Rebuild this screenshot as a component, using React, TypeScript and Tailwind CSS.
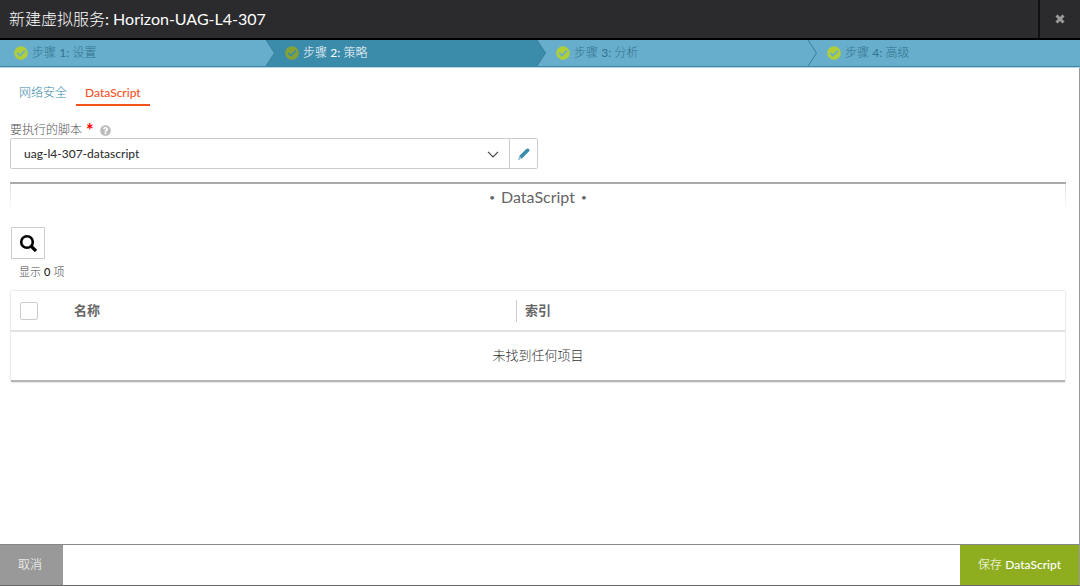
import React from 'react';
import { FaCheckCircle, FaQuestionCircle } from 'react-icons/fa';

const steps = [
  { id: 1, label: '设置' },
  { id: 2, label: '策略' },
  { id: 3, label: '分析' },
  { id: 4, label: '高级' },
];

const CURRENT_STEP = 2;

function StepArrow({ current, nextCurrent }: { current: boolean; nextCurrent: boolean }) {
  return (
    <svg className="absolute top-0 -right-1 z-10 h-[26px] w-[9px]" viewBox="0 0 9 26" aria-hidden="true">
      <path d="M0 0H9V26H0Z" className={nextCurrent ? 'fill-[#3b8bab]' : 'fill-[#66aecb]'} />
      <path
        d="M0 0L8.5 13L0 26"
        className={current ? 'fill-[#3b8bab]' : 'fill-[#66aecb]'}
        stroke="#3a7f9b"
        strokeWidth="1"
      />
    </svg>
  );
}

function StepBar() {
  return (
    <nav className="border-b border-[#b4d8e6]" aria-label="步骤">
      <ol className="grid grid-cols-[271fr_271fr_271fr_267fr] border-b border-[#3b87a5] bg-[#66aecb]">
        {steps.map((step, i) => {
          const current = step.id === CURRENT_STEP;
          return (
            <li key={step.id} className={`relative h-[26px] ${current ? 'bg-[#3b8bab]' : 'bg-[#66aecb]'}`}>
              <a
                href={`#step-${step.id}`}
                aria-current={current ? 'step' : undefined}
                className={`flex h-full items-center gap-1 pl-3.5 text-xs ${current ? 'text-white' : 'text-[#33738d]'}`}
              >
                <FaCheckCircle className={`size-3.5 ${current ? 'text-[#86a136]' : 'text-[#b0ce3c]'}`} />
                <span>
                  步骤 <b>{step.id}:</b> {step.label}
                </span>
              </a>
              {i < steps.length - 1 && (
                <StepArrow current={current} nextCurrent={steps[i + 1].id === CURRENT_STEP} />
              )}
            </li>
          );
        })}
      </ol>
    </nav>
  );
}

function ItemsTable() {
  return (
    <table className="w-full table-fixed border-collapse border-b-2 border-b-[#b5b5b5] text-[13px] shadow-[0_0_2px_rgba(0,0,0,0.25)]">
      <thead>
        <tr className="h-10 border-b-2 border-[#e2e2e2] text-left text-[#666]">
          <th className="w-[54px] pl-[9px]">
            <input
              type="checkbox"
              aria-label="全选"
              className="block size-[18px] appearance-none rounded-xs border border-[#ccc] bg-white"
            />
          </th>
          <th className="w-[451px] pl-[9px] font-bold">名称</th>
          <th className="font-bold">
            <div className="flex h-[22px] items-center border-l border-[#ccc] pl-2">索引</div>
          </th>
        </tr>
      </thead>
      <tbody>
        <tr className="h-[50px]">
          <td colSpan={3} className="text-center text-[#333]">
            未找到任何项目
          </td>
        </tr>
      </tbody>
    </table>
  );
}

export default function App() {
  return (
    <div className="flex min-h-screen flex-col bg-white font-['Lato','Noto_Sans_CJK_SC',sans-serif] text-[13px] font-light text-[#333]">
      <header className="flex h-10 items-stretch justify-between border-b-2 border-black bg-[#2b2b2d]">
        <h1 className="flex items-center pl-[9px] text-base font-light text-white">
          <span>
            新建虚拟服务<span className="font-normal">: Horizon-UAG-L4-307</span>
          </span>
        </h1>
        <button
          type="button"
          aria-label="关闭"
          className="flex w-[42px] items-center justify-center border-l-2 border-[#111] text-[#999]"
        >
          <svg className="size-2.5" viewBox="0 0 10 10" stroke="currentColor" strokeWidth="3" aria-hidden="true">
            <path d="M1.5 1.5L8.5 8.5M8.5 1.5L1.5 8.5" />
          </svg>
        </button>
      </header>

      <StepBar />

      <div className="flex flex-1 flex-col border-r border-b border-r-[#999] border-b-[#666]">
        <main className="flex-1 pr-[13px] pl-2.5">
          <nav className="flex pt-3.5 text-xs leading-[22px]" aria-label="策略">
            <a href="#network-security" className="px-[9px] text-[#3b8bab]">
              网络安全
            </a>
            <a
              href="#datascript"
              aria-current="page"
              className="border-b-2 border-[#f4511e] px-[9px] font-medium text-[#f4511e]"
            >
              DataScript
            </a>
          </nav>

          <div className="flex h-8 items-end gap-1 text-xs leading-4 text-[#555]">
            <label htmlFor="script">要执行的脚本</label>
            <span className="text-lg leading-4 font-bold text-[#f00]">*</span>
            <FaQuestionCircle className="mb-0.5 ml-0.5 size-[11px] text-[#bbb]" />
          </div>

          <div className="flex h-[31px] w-1/2 rounded-xs border border-[#ccc]">
            <div className="relative flex-1">
              <select
                id="script"
                className="h-full w-full appearance-none bg-transparent pl-[13px] text-xs font-medium text-[#333]"
              >
                <option>uag-l4-307-datascript</option>
              </select>
              <svg
                className="pointer-events-none absolute top-3 right-2.5 h-[7px] w-3"
                viewBox="0 0 12 7"
                fill="none"
                stroke="#444"
                strokeWidth="1.2"
                aria-hidden="true"
              >
                <path d="M1 0.8L6 5.8L11 0.8" />
              </svg>
            </div>
            <button
              type="button"
              aria-label="编辑"
              className="flex w-7 items-center justify-center border-l border-[#ccc] text-[#3b8bab]"
            >
              <svg className="size-3" viewBox="0 0 12 12" fill="currentColor" aria-hidden="true">
                <path d="M8.2 1.1Q9.5 -0.2 10.9 0.9Q12.3 2.3 10.9 3.6L4.2 10.2L0.2 11.9L1.5 7.7Z" />
                <path d="M1.8 8.7L3.3 10.2L1.6 10.8L1.2 10.4Z" fill="#fff" />
              </svg>
            </button>
          </div>

          <section className="pt-[13px]">
            <h2 className="flex items-center justify-center gap-1.5 border-t-2 border-[#aaa] bg-[linear-gradient(#ddd,#fff),linear-gradient(#ddd,#fff)] bg-[length:1px_100%] bg-[position:left,right] bg-no-repeat pb-0.5 text-base leading-[26px] font-normal text-[#666]">
              <span className="text-[10px]">•</span>
              DataScript
              <span className="text-[10px]">•</span>
            </h2>

            <div className="mx-px pt-[15px]">
              <button
                type="button"
                aria-label="搜索"
                className="flex h-8 w-[34px] items-center justify-center border border-[#ccc] text-black"
              >
                <svg className="size-[18px]" viewBox="0 0 18 18" fill="none" stroke="currentColor" aria-hidden="true">
                  <circle cx="8" cy="8" r="5.8" strokeWidth="2.6" />
                  <path d="M12 12L17 17" strokeWidth="3.2" />
                </svg>
              </button>
              <p className="pt-[3px] pb-[9px] pl-2 text-[11px] leading-5 text-[#444]">
                显示 <span className="font-medium text-[#222]">0</span> 项
              </p>
              <ItemsTable />
            </div>
          </section>
        </main>

        <footer className="flex h-[41px] items-stretch justify-between border-t border-[#888] text-xs">
          <button type="button" className="bg-[#999] pr-[21px] pl-[18px] text-white">
            取消
          </button>
          <button type="button" className="bg-[#8fae1f] px-[18px] font-light text-white">
            保存 <span className="font-medium">DataScript</span>
          </button>
        </footer>
      </div>
    </div>
  );
}
